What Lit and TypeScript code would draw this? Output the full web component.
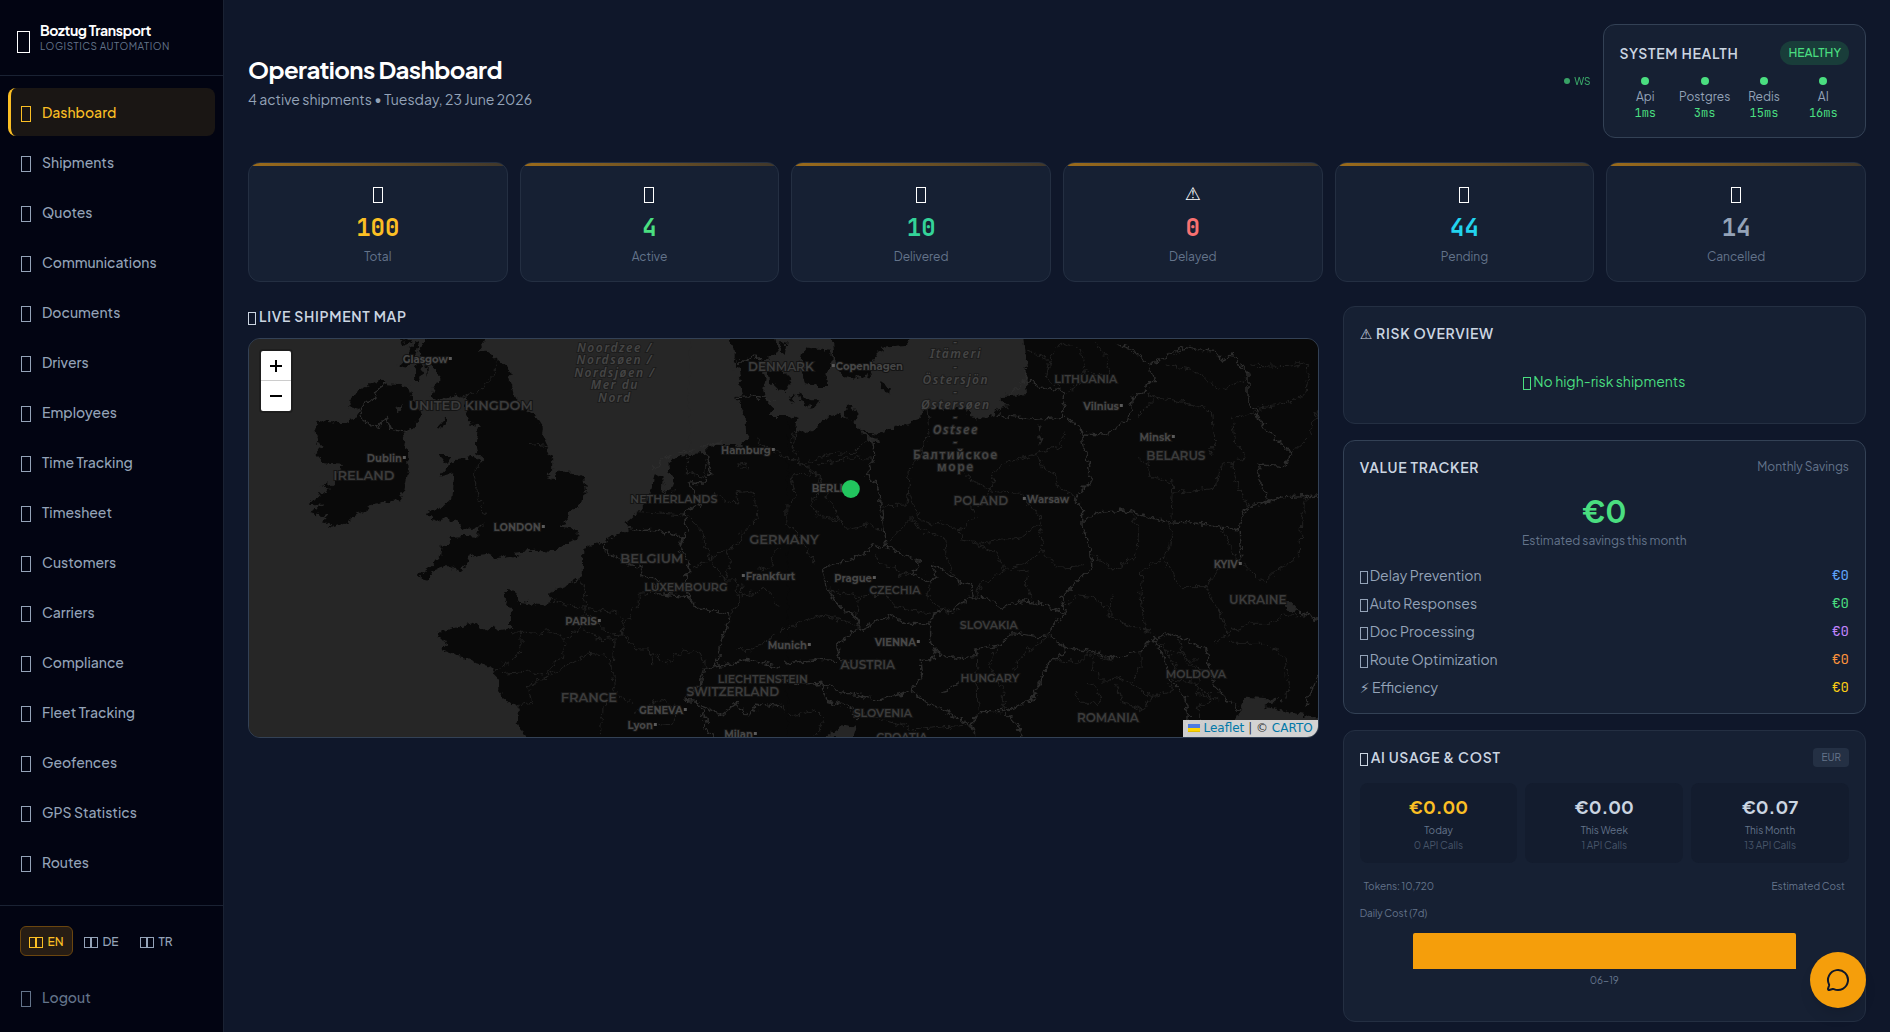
import { LitElement, html, css, svg } from "lit";
import { customElement, property, state } from "lit/decorators.js";
import { classMap } from "lit/directives/class-map.js";
import { styleMap } from "lit/directives/style-map.js";

const base = css`
  *,
  *::before,
  *::after {
    box-sizing: border-box;
  }
  h1,
  h2,
  p,
  ul,
  dl,
  dd,
  dt {
    margin: 0;
    padding: 0;
  }
  ul {
    list-style: none;
  }
  button {
    font: inherit;
    color: inherit;
    background: none;
    border: 0;
    padding: 0;
    cursor: pointer;
  }
  a {
    color: inherit;
    text-decoration: none;
  }
  .mono {
    font-family: "JetBrains Mono", "DejaVu Sans Mono", monospace;
  }
  .glyph {
    display: inline-block;
    width: 8px;
    height: 13px;
    margin-right: 2px;
    border: 1px solid currentColor;
    vertical-align: -3px;
  }
  .glyph.large {
    width: 10px;
    height: 16px;
    margin-right: 0;
  }
`;

const panel = css`
  .panel {
    background: rgba(30, 41, 59, 0.5);
    border: 1px solid #242f42;
    border-radius: 12px;
    padding: 16px;
  }
  .panel.strong {
    border-color: #334155;
  }
  .heading {
    font-size: 14px;
    line-height: 20px;
    font-weight: 600;
    letter-spacing: 0.05em;
    color: #cbd5e1;
  }
  .heading .glyph {
    margin-right: 3px;
  }
  .row {
    display: flex;
    align-items: center;
    justify-content: space-between;
  }
`;

/* Outlined placeholder box used for pictographs. */
const glyph = html`<i class="glyph" aria-hidden="true"></i>`;
const largeGlyph = html`<i class="glyph large" aria-hidden="true"></i>`;

/* ---------- Sidebar ---------- */

const NAV = [
  "Dashboard",
  "Shipments",
  "Quotes",
  "Communications",
  "Documents",
  "Drivers",
  "Employees",
  "Time Tracking",
  "Timesheet",
  "Customers",
  "Carriers",
  "Compliance",
  "Fleet Tracking",
  "Geofences",
  "GPS Statistics",
  "Routes",
];

const LANGS = ["EN", "DE", "TR"];

@customElement("side-bar")
class SideBar extends LitElement {
  @state() private active = "Dashboard";
  @state() private lang = "EN";

  static styles = [
    base,
    css`
      :host {
        display: flex;
        flex-direction: column;
        width: 224px;
        flex: none;
        background: #020412;
        border-right: 1px solid #1a2233;
      }
      .brand {
        display: flex;
        align-items: center;
        gap: 10px;
        height: 76px;
        flex: none;
        padding: 0 17px;
        border-bottom: 1px solid #1a2233;
      }
      .logo {
        font-size: 24px;
        line-height: 32px;
        color: #fff;
      }
      .logo .glyph {
        width: 13px;
        height: 22px;
        margin: 0;
        vertical-align: -5px;
      }
      .name {
        font-size: 14px;
        line-height: 18px;
        font-weight: 700;
        letter-spacing: -0.025em;
        color: #fff;
      }
      .tag {
        font-size: 10px;
        line-height: 15px;
        letter-spacing: 0.05em;
        color: #64748b;
      }
      nav {
        flex: 1;
        min-height: 0;
        overflow: hidden;
        padding: 12px 8px;
      }
      ul {
        display: grid;
        gap: 2px;
      }
      .item {
        display: flex;
        align-items: center;
        gap: 11px;
        width: 100%;
        height: 48px;
        padding: 0 12px 0 10px;
        border-left: 3px solid transparent;
        border-radius: 8px;
        font-size: 14px;
        font-weight: 500;
        color: #94a3b8;
      }
      .item.on {
        color: #fbbf24;
        border-left-color: #fbbf24;
        background: #1a1614;
      }
      .icon {
        font-size: 18px;
        line-height: 28px;
      }
      .foot {
        flex: none;
        border-top: 1px solid #1a2233;
        padding: 20px 8px 11px;
      }
      .langs {
        display: flex;
        gap: 2px;
        padding: 0 12px;
        margin-bottom: 17px;
      }
      .lang {
        min-width: 53px;
        height: 30px;
        padding: 0 8px;
        border: 1px solid transparent;
        border-radius: 6px;
        font-size: 12px;
        font-weight: 500;
        color: #94a3b8;
        white-space: nowrap;
      }
      .lang .glyph {
        width: 7px;
        height: 11px;
        margin: 0;
        vertical-align: -2px;
      }
      .lang .glyph + span {
        margin-left: 4px;
      }
      .lang.on {
        color: #fbbf24;
        background: #271d14;
        border-color: #6b460f;
      }
      .logout {
        color: #64748b;
      }
    `,
  ];

  render() {
    return html`
      <div class="brand">
        <span class="logo">${glyph}</span>
        <div>
          <p class="name">Boztug Transport</p>
          <p class="tag">LOGISTICS AUTOMATION</p>
        </div>
      </div>
      <nav>
        <ul>
          ${NAV.map(
            (label) => html`<li>
              <a
                href="#"
                class=${classMap({ item: true, on: label === this.active })}
                @click=${(e: Event) => {
                  e.preventDefault();
                  this.active = label;
                }}
                ><span class="icon">${largeGlyph}</span><span>${label}</span></a
              >
            </li>`,
          )}
        </ul>
      </nav>
      <div class="foot">
        <div class="langs">
          ${LANGS.map(
            (code) => html`<button
              class=${classMap({ lang: true, on: code === this.lang })}
              @click=${() => (this.lang = code)}
            >${glyph}${glyph}<span>${code}</span></button>`,
          )}
        </div>
        <button class="item logout"><span class="icon">${largeGlyph}</span><span>Logout</span></button>
      </div>
    `;
  }
}

/* ---------- System health ---------- */

const SERVICES: [string, string][] = [
  ["Api", "1ms"],
  ["Postgres", "3ms"],
  ["Redis", "15ms"],
  ["AI", "16ms"],
];

@customElement("system-health")
class SystemHealth extends LitElement {
  static styles = [
    base,
    panel,
    css`
      :host {
        display: block;
      }
      .badge {
        font-size: 12px;
        line-height: 16px;
        font-weight: 500;
        padding: 4px 8px;
        border-radius: 12px;
        color: #4ade80;
        background: #193d3a;
      }
      .services {
        display: grid;
        grid-template-columns: repeat(4, minmax(51px, 1fr));
        gap: 8px;
        margin-top: 12px;
      }
      .service {
        display: flex;
        flex-direction: column;
        align-items: center;
        font-size: 12px;
        line-height: 16px;
        color: #94a3b8;
      }
      .dot {
        width: 8px;
        height: 8px;
        border-radius: 50%;
        background: #4ade80;
        margin-bottom: 4px;
      }
      .ms {
        color: #4ade80;
      }
    `,
  ];

  render() {
    return html`<section class="panel strong">
      <div class="row">
        <h2 class="heading">SYSTEM HEALTH</h2>
        <span class="badge">HEALTHY</span>
      </div>
      <div class="services">
        ${SERVICES.map(
          ([name, ms]) => html`<div class="service">
            <span class="dot"></span><span>${name}</span><span class="ms mono">${ms}</span>
          </div>`,
        )}
      </div>
    </section>`;
  }
}

/* ---------- Stat card ---------- */

@customElement("stat-card")
class StatCard extends LitElement {
  @property() icon = "";
  @property() value = "";
  @property() label = "";
  @property() color = "";

  static styles = [
    base,
    css`
      :host {
        display: block;
      }
      .card {
        position: relative;
        overflow: hidden;
        padding: 16px;
        text-align: center;
        background: rgba(30, 41, 59, 0.5);
        border: 1px solid #242f42;
        border-radius: 12px;
      }
      .card::before {
        content: "";
        position: absolute;
        top: 0;
        left: 0;
        right: 0;
        height: 3px;
        background: linear-gradient(90deg, #f59e0b, rgba(245, 158, 11, 0.3));
        opacity: 0.6;
      }
      .icon {
        font-size: 18px;
        line-height: 28px;
        height: 28px;
        color: #fff;
      }
      .value {
        font-size: 24px;
        line-height: 34px;
        margin-top: 4px;
        font-weight: 700;
      }
      .label {
        font-size: 12px;
        line-height: 16px;
        margin-top: 4px;
        color: #64748b;
      }
    `,
  ];

  render() {
    return html`<div class="card">
      <p class="icon">${this.icon || largeGlyph}</p>
      <p class="value mono" style=${styleMap({ color: this.color })}>${this.value}</p>
      <p class="label">${this.label}</p>
    </div>`;
  }
}

/* ---------- Map ---------- */

const WEST_LAND = [
  "M1427 20L1430 90L1448 110L1455 150L1440 200L1462 250L1460 280L1475 320L1450 325L1450 345L1395 345L1355 352L1355 368L1310 372L1275 378L1248 395L1250 430L1262 445L1255 480L1235 490L1240 460L1222 435L1205 430L1198 470L1190 505L1165 540L1120 580L1140 595L1110 605L1058 635L995 655L993 740L960 762L900 785L897 805L915 812L875 825L810 815L800 785L765 782L770 810L787 835L788 895L755 900L735 890L710 905L680 878L640 890L580 905L580 925L605 940L585 960L625 975L660 985L690 1000L740 1015L735 1030L755 1050L750 1080L775 1115L810 1130L810 1180L840 1240L1590 1240L1590 20Z",
  "M555 200L560 180L580 150L570 120L530 90L520 60L530 40L545 10L720 10L710 40L690 65L640 70L715 62L750 90L782 120L788 160L800 210L825 230L858 255L880 290L878 310L895 348L885 355L910 390L910 415L890 435L918 445L922 425L965 425L1000 445L1005 480L998 520L975 535L955 555L950 580L920 590L982 602L980 622L940 645L905 665L850 662L800 668L805 685L780 678L745 685L720 672L690 675L665 685L655 712L640 725L615 712L590 712L560 722L550 750L515 742L535 725L555 710L585 675L590 645L610 645L612 622L650 618L690 620L690 602L715 575L690 590L668 600L645 590L630 575L600 565L565 575L540 545L580 540L615 505L618 460L620 430L580 440L610 405L630 390L660 385L680 378L700 395L710 385L690 370L685 340L690 310L700 285L680 290L665 270L650 240L655 205L620 195L580 210Z",
  "M405 150L425 160L460 162L490 168L500 200L515 225L525 255L515 280L495 302L470 310L475 335L485 360L488 430L478 480L465 510L430 515L385 525L350 550L310 575L270 590L235 580L255 562L205 545L240 525L200 518L240 490L265 478L240 468L270 460L285 425L300 405L245 400L220 370L245 350L220 340L235 315L215 305L225 272L290 280L330 270L350 240L315 230L330 205L345 180L375 165Z",
  "M600 260L598 280L580 298L575 290Z",
  "M583 378L610 378L612 395L600 403Z",
  "M790 675L815 675L800 685Z",
  "M510 150L508 115L520 92L532 112L522 150Z",
  "M545 138L538 110L546 108Z",
  "M470 28L500 30L490 50L474 45Z",
  "M480 85L500 45L520 35L510 75L490 110L462 105Z",
];

const WEST_WATER = ["M1228 445L1250 425L1262 448L1255 470L1225 490Z", "M452 235L470 225L472 245L458 248Z"];

const BALTIC_WATER = [
  "M250 0L265 50L215 75L225 120L220 160L225 190L250 215L240 240L290 240L320 248L315 285L350 290L380 275L400 250L440 235L465 245L490 255L510 280L540 290L560 295L620 270L680 255L700 225L740 215L830 215L840 240L880 248L915 235L930 215L960 210L930 200L930 180L1015 178L1000 0L665 0L650 30L575 35L565 60L540 90L550 115L500 125L460 120L440 90L430 50L425 0Z",
  "M510 275L530 298L560 305L565 322L540 318L515 292Z",
  "M120 0L135 60L128 100L150 120L160 180L150 220L165 240L165 280L180 305L150 330L100 322L60 330L20 345L0 352L0 0Z",
];

const BALTIC_ISLANDS = [
  "M235 110L265 100L290 115L305 145L290 165L265 160L245 140Z",
  "M335 60L355 35L395 40L425 45L425 80L405 120L410 150L380 150L345 140L335 110L345 90Z",
  "M320 172L360 190L392 190L370 215L340 205Z",
  "M300 190L318 170L308 200Z",
  "M575 138L600 155L598 172L573 160Z",
  "M468 215L485 208L503 235L495 258L465 240Z",
  "M270 20L290 15L285 60L275 50Z",
  "M140 180L160 178L158 195L142 192Z",
];

const EAST_WATER = [
  "M1330 1100L1430 1108L1400 1120L1380 1130L1450 1145L1540 1165L1540 1232L1240 1232L1300 1165Z",
  "M125 1225L180 1185L220 1190L205 1230Z",
  "M1432 815L1450 812L1485 850L1455 842Z",
  "M735 285L748 290L740 308Z",
  "M736 320L750 325L742 345Z",
];

const WEST_BORDERS = [
  "M428 160L400 180L390 205L370 215L350 245L360 270L400 292L425 262L440 295L490 305",
  "M1058 638L1062 665L1130 700L1165 715L1170 745L1215 750L1205 790L1300 800L1330 835L1430 857",
  "M1140 600L1180 598L1215 600L1260 612L1285 625L1275 655L1300 690L1310 715L1290 750L1305 800",
  "M1355 370L1365 430L1355 460L1305 455L1335 520L1290 550L1300 600L1280 650",
  "M1430 857L1410 890L1395 950L1388 1008L1350 1015L1340 1060L1290 1110L1330 1115L1355 1170L1345 1200L1380 1218",
  "M1388 1008L1440 1000L1470 985L1540 1005L1568 1012",
  "M1345 1130L1400 1155L1440 1120L1480 1165L1500 1120L1568 1130",
];

const WEST_REGIONS = [
  "M640 200L690 185L740 135L745 95",
  "M700 395L680 435L690 500L715 555",
  "M840 340L880 345L895 348",
  "M985 745L1000 780L1005 835L950 825L905 808",
  "M1005 835L1100 850L1120 880L1160 820L1160 790L1215 785",
  "M1120 880L1110 915L1080 918L1005 850",
  "M788 905L870 910L900 905L945 925L990 890L1000 840",
  "M818 905L815 970L735 1025",
  "M945 925L940 980L905 1005L892 1040L850 1025L750 1035",
  "M892 1040L960 1000L1010 970L1060 975L1080 1010L1090 1085L1140 1115",
  "M892 1045L835 1065L848 1120L805 1128",
  "M1110 905L1150 960L1190 960L1200 1000",
  "M1000 900L1050 930L1090 925L1085 1000",
  "M1185 960L1240 1000L1290 960L1340 975L1355 1010",
  "M1090 1085L1055 1130L1050 1215",
  "M1150 1150L1215 1110L1270 1130L1260 1185L1210 1180",
  "M1300 555L1340 600L1365 685L1410 750L1440 750",
  "M1380 490L1420 520L1450 515L1440 485L1490 480L1505 560L1460 610L1450 640L1410 660L1360 690L1310 715",
  "M1440 750L1450 810L1430 857",
  "M1355 380L1350 440L1300 430L1300 380",
  "M1440 955L1490 960L1560 910",
  "M1410 660L1425 700L1410 750",
  "M1480 790L1525 775L1568 830",
  "M1455 760L1460 800L1500 790",
  "M1160 545L1230 550L1290 555",
  "M1568 650L1540 680L1550 710L1500 720",
];

const EAST_BORDERS = [
  "M265 318L268 380L250 432L282 480L288 540L305 650L285 655L265 638L258 660L200 690L120 715L140 780L160 820L215 860L232 900L310 858L360 880L430 882L440 850L500 835L545 800",
  "M305 645L345 670L395 690L390 720L375 730L430 755L445 735L435 705L475 725L510 755L540 765L552 800L595 805L630 835L690 812L750 820L815 855L803 800L890 710L885 660L865 590L862 530L838 505L885 455L880 400L862 320L855 290L815 262",
  "M700 150L750 172L805 185L815 215L805 262L730 268L620 255",
  "M862 312L925 315L995 270L1005 205L1045 180L1050 155L1070 155L1052 110",
  "M960 40L1000 55L1055 105L1160 50L1240 65L1260 90L1290 75L1335 130L1335 210L1380 290L1455 370L1440 410L1370 405L1365 440L1395 515L1370 525",
  "M862 575L910 548L980 540L1100 575L1190 580L1250 590L1310 600L1315 560L1340 530L1440 500L1535 495",
  "M1310 600L1315 700",
  "M232 900L205 905L165 945L175 995L210 1000",
  "M430 882L430 935L450 970L490 985L555 980L560 955L630 945L660 908L735 920L770 915L815 955L790 985L770 990L720 1110L640 1145L570 1145L545 1185L400 1105L375 1080L405 1040L400 990L440 985L445 950",
  "M770 915L775 885L815 855",
  "M815 955L880 960L950 985L1030 965L1060 930L1110 910L1150 925L1215 960L1225 1010L1240 1070L1310 1145",
  "M1065 925L1090 970L1110 1050L1150 1090L1165 1150L1160 1220",
  "M0 1050L60 1065L120 1060L170 1085L280 1110L375 1085",
  "M10 1000L100 990L165 995",
  "M545 1185L560 1222",
  "M640 1145L680 1190L685 1222",
  "M120 1060L130 1110L200 1130L220 1170",
  "M1480 845L1535 868",
  "M1535 1035L1510 1090L1500 1130",
];

const EAST_REGIONS = [
  "M420 240L425 310L395 385L370 410L365 480L360 525L290 528",
  "M0 375L60 400L110 435L120 470L170 570L195 600L250 585L290 600",
  "M30 440L60 430L110 435L125 480L90 520L110 560L180 575",
  "M30 440L45 500L20 530L20 580L50 610L100 700",
  "M260 320L210 370L130 375L60 410",
  "M40 300L30 340L50 370",
  "M365 480L400 570L440 585L460 575L510 600L560 560L540 520L580 525L610 450L600 430",
  "M600 430L645 400L735 370L800 345L815 305",
  "M735 370L750 420L790 435L795 470L838 500",
  "M515 420L560 460L610 485L690 490L740 560L750 660L700 700L640 720L575 760L560 800",
  "M510 600L520 630L570 640L635 630L690 620L745 575",
  "M620 690L660 725L705 720L700 760L720 810",
  "M750 665L790 715L870 710",
  "M555 640L620 670L640 720",
  "M305 640L350 590L375 565L400 600",
  "M400 600L470 620L475 680L500 740",
  "M225 800L300 790L330 830L430 850",
  "M215 860L225 800L140 780",
  "M390 720L340 740L330 710L280 700L270 670",
  "M440 740L420 800L480 850L520 840",
  "M0 905L30 890L115 855L190 875L225 890",
  "M560 960L565 1140",
  "M620 940L600 1010L640 1090L640 1140",
  "M660 1030L690 980L770 915",
  "M790 990L850 1000L880 970L950 990",
  "M900 960L890 1020L930 1060L960 1040L1000 1060L1030 1010L1030 970",
  "M840 1080L860 1120L920 1120L900 1070L870 1060",
  "M960 1060L980 1120L1040 1140L1060 1100L1000 1060",
  "M1060 1100L1120 1080L1110 1050",
  "M1000 545L1025 600L1015 680L950 720L905 685L890 670",
  "M1110 575L1120 610L1100 680L1035 720L1030 800L1040 900L1065 915",
  "M950 790L935 850L1000 890L1060 905",
  "M1100 690L1140 770L1215 770L1260 700",
  "M1215 770L1260 860L1280 910L1235 945",
  "M1280 910L1340 880L1400 880L1430 860L1500 855L1535 865",
  "M1320 700L1380 760L1420 720L1480 680L1490 560L1500 500",
  "M1260 600L1310 700",
  "M705 60L770 90L760 145L805 180",
  "M770 90L800 40L860 60L870 120L930 140L940 95L900 40",
  "M870 120L850 170L810 190",
  "M1070 200L1120 210L1230 240L1240 330L1225 370",
  "M1045 190L1070 205L1020 260",
  "M1100 105L1190 125L1250 180L1330 150",
  "M1290 265L1300 340L1330 385L1290 395L1300 450L1335 530",
  "M1300 265L1340 255L1360 240",
  "M1340 105L1440 110L1510 100L1500 190L1430 225L1360 235",
  "M1020 385L1050 400L1055 440L1120 460L1125 490L1240 475L1260 400L1290 395",
  "M1120 460L1115 575",
  "M1460 370L1510 320L1535 240",
  "M1070 920L1100 960L1150 970L1180 1010L1220 1020",
  "M1100 960L1130 1010L1120 1050L1180 1060L1230 1100",
  "M1140 930L1150 990L1200 990",
  "M1160 1000L1200 1040L1190 1090L1250 1110",
  "M1280 940L1380 940L1440 980L1450 1060L1440 1110",
  "M1240 1110L1190 1130L1210 1180L1170 1200",
  "M0 1120L30 1160L100 1140L130 1170L100 1220",
  "M200 1130L260 1160L330 1180L380 1200L470 1190L545 1185",
  "M810 830L850 795L890 800L950 850",
];

const COUNTRIES: [string, number, number, "l" | "m" | "s"][] = [
  ["UNITED KINGDOM", 222, 66, "l"],
  ["IRELAND", 115, 136, "l"],
  ["NETHERLANDS", 425, 160, "s"],
  ["BELGIUM", 403, 219, "l"],
  ["LUXEMBOURG", 437, 248, "s"],
  ["FRANCE", 340, 358, "l"],
  ["DENMARK", 532, 27, "m"],
  ["SWITZERLAND", 484, 352, "m"],
  ["LIECHTENSTEIN", 514, 340, "s"],
  ["GERMANY", 535, 200, "l"],
  ["CZECHIA", 646, 251, "s"],
  ["AUSTRIA", 619, 325, "m"],
  ["SLOVENIA", 634, 374, "s"],
  ["CROATIA", 653, 398, "s"],
  ["HUNGARY", 741, 339, "s"],
  ["SLOVAKIA", 740, 286, "s"],
  ["POLAND", 732, 161, "m"],
  ["LITHUANIA", 837, 40, "s"],
  ["BELARUS", 927, 116, "m"],
  ["UKRAINE", 1009, 260, "m"],
  ["MOLDOVA", 947, 335, "s"],
  ["ROMANIA", 859, 378, "m"],
];

/* name, x of the settlement dot, centre y, side of the dot the name stands on */
const CITIES: [string, number, number, "start" | "end"][] = [
  ["Glasgow", 201, 20, "end"],
  ["Dublin", 155, 119, "end"],
  ["LONDON", 294, 188, "end"],
  ["PARIS", 350, 282, "end"],
  ["GENEVA", 436, 371, "end"],
  ["Lyon", 406, 386, "end"],
  ["Milan", 506, 395, "end"],
  ["Hamburg", 524, 111, "end"],
  ["Copenhagen", 584, 27, "start"],
  ["Frankfurt", 494, 237, "start"],
  ["Munich", 560, 306, "end"],
  ["BERLIN", 604, 149, "end"],
  ["Prague", 625, 239, "end"],
  ["VIENNA", 669, 303, "end"],
  ["Warsaw", 775, 160, "start"],
  ["Vilnius", 872, 67, "end"],
  ["Minsk", 924, 98, "end"],
  ["KYIV", 991, 225, "end"],
];

const SEAS: [string, number, number][] = [
  ["Noordzee /", 366, 8],
  ["Nordsøen /", 366, 20],
  ["Nordsjøen /", 366, 33],
  ["Mer du", 366, 45],
  ["Nord", 366, 58],
  ["-", 707, 2],
  ["Itämeri", 707, 14],
  ["-", 707, 27],
  ["Östersjön", 707, 40],
  ["-", 707, 52],
  ["Østersøen", 707, 65],
  ["-", 707, 77],
  ["Ostsee", 707, 90],
  ["-", 707, 102],
];

@customElement("shipment-map")
class ShipmentMap extends LitElement {
  static styles = [
    base,
    css`
      :host {
        display: block;
      }
      .frame {
        position: relative;
        height: 400px;
        border: 1px solid #334155;
        border-radius: 12px;
        overflow: hidden;
        background: #262626;
      }
      .canvas {
        display: block;
        width: 100%;
        height: 100%;
      }
      .land {
        fill: #090909;
      }
      .water {
        fill: #262626;
      }
      .border,
      .region {
        fill: none;
        vector-effect: non-scaling-stroke;
        stroke-linejoin: round;
      }
      .border {
        stroke: #2d2d2d;
        stroke-width: 1.4;
      }
      .region {
        stroke: #202020;
        stroke-width: 1;
      }
      text {
        text-anchor: middle;
        dominant-baseline: central;
        paint-order: stroke;
        stroke: #141414;
        stroke-width: 2;
        font-family: Montserrat, sans-serif;
        font-weight: 600;
      }
      .country {
        fill: #3c3c3c;
      }
      .l {
        font-size: 13px;
      }
      .m {
        font-size: 12px;
      }
      .s {
        font-size: 11px;
      }
      .city {
        font-size: 10px;
        font-weight: 700;
        fill: #474747;
      }
      .start {
        text-anchor: start;
      }
      .end {
        text-anchor: end;
      }
      .sea {
        font-family: "Noto Sans", sans-serif;
        font-size: 12px;
        font-style: italic;
        letter-spacing: 0.125em;
        fill: #454545;
        stroke: #1c1c1c;
      }
      .upright {
        font-style: normal;
      }
      .pin {
        fill: #22c55e;
      }
      .zoom {
        position: absolute;
        top: 10px;
        left: 10px;
        display: grid;
        border: 2px solid rgba(0, 0, 0, 0.2);
        border-radius: 4px;
      }
      .zoom button {
        display: flex;
        align-items: center;
        justify-content: center;
        width: 30px;
        height: 30px;
        background: #fff;
      }
      .zoom button:first-child {
        border-bottom: 1px solid #ccc;
        border-radius: 2px 2px 0 0;
      }
      .zoom button:last-child {
        border-radius: 0 0 2px 2px;
      }
      .credit {
        position: absolute;
        right: 0;
        bottom: 0;
        padding: 0 5px;
        font-family: "DejaVu Sans", sans-serif;
        font-size: 12px;
        line-height: 17px;
        color: #333;
        background: rgba(255, 255, 255, 0.8);
        white-space: nowrap;
      }
      .credit a {
        color: #0078a8;
      }
    `,
  ];

  private paths(list: string[], cls: string) {
    return list.map((d) => svg`<path class=${cls} d=${d}></path>`);
  }

  render() {
    return html`<div class="frame">
      <svg class="canvas" viewBox="0 0 1069 398" preserveAspectRatio="xMidYMid slice" role="img" aria-label="Shipment map">
        <defs>
          <filter id="rough" x="0" y="0" width="1069" height="398" filterUnits="userSpaceOnUse" color-interpolation-filters="sRGB">
            <feTurbulence type="fractalNoise" baseFrequency="0.16" numOctaves="3" seed="4" result="n"></feTurbulence>
            <feDisplacementMap in="SourceGraphic" in2="n" scale="9" xChannelSelector="R" yChannelSelector="G"></feDisplacementMap>
          </filter>
        </defs>
        <g filter="url(#rough)">
          <rect class="water" x="-20" y="-20" width="1110" height="440"></rect>
          <rect class="land" x="531" y="-20" width="560" height="440"></rect>
          <g transform="translate(-9 -9) scale(0.3443 0.3333)">
            ${this.paths(WEST_LAND, "land")} ${this.paths(WEST_WATER, "water")}
          </g>
          <g transform="translate(441 -3) scale(0.3333)">
            ${this.paths(BALTIC_WATER, "water")} ${this.paths(BALTIC_ISLANDS, "land")}
          </g>
          <g transform="translate(531 -9) scale(0.3507 0.3333)">
            ${this.paths(EAST_WATER, "water")} ${this.paths(EAST_REGIONS, "region")}
            ${this.paths(EAST_BORDERS, "border")}
            <path class="border" d="M455 1085L480 1080L510 1058"></path>
          </g>
          <g transform="translate(-9 -9) scale(0.3443 0.3333)">
            ${this.paths(WEST_REGIONS, "region")} ${this.paths(WEST_BORDERS, "border")}
            <path class="border" d="M1200 420L1225 390L1260 372M1280 368L1320 358M1340 350L1400 335"></path>
          </g>
          <g transform="translate(441 -3) scale(0.3333)">
            <path class="border" d="M135 185L190 182L250 195"></path>
            <path class="border" d="M1010 100L1000 140L960 180"></path>
            <path class="border" d="M140 75L165 75L200 58L212 70"></path>
            <path class="region" d="M200 305L215 330L270 350L330 385L385 420L385 460L365 500"></path>
            <path class="region" d="M315 290L310 340L330 380M385 385L440 375L480 365L545 370"></path>
            <path class="region" d="M150 380L180 390L175 400L155 392Z"></path>
          </g>
        </g>
        ${COUNTRIES.map(([t, x, y, size]) => svg`<text class="country ${size}" x=${x} y=${y}>${t}</text>`)}
        ${CITIES.map(
          ([t, x, y, side]) => svg`<text class="city ${side}" x=${side === "end" ? x - 2 : x + 3} y=${y}>${t}</text>
            <rect x=${x - 1} y=${y - 2} width="3" height="3" fill="#5a5a5a"></rect>`,
        )}
        ${SEAS.map(([t, x, y]) => svg`<text class="sea" x=${x} y=${y}>${t}</text>`)}
        <text class="sea upright" x="707" y="115">Балтийское</text>
        <text class="sea upright" x="707" y="127">море</text>
        <circle class="pin" cx="602" cy="150" r="9"></circle>
      </svg>
      <div class="zoom">
        <button aria-label="Zoom in">
          <svg width="12" height="12" viewBox="0 0 12 12"><path d="M6 0V12M0 6H12" stroke="#000" stroke-width="2"></path></svg>
        </button>
        <button aria-label="Zoom out">
          <svg width="12" height="12" viewBox="0 0 12 12"><path d="M0 6H12" stroke="#000" stroke-width="2"></path></svg>
        </button>
      </div>
      <div class="credit">
        <a href="#"
          ><svg width="12" height="8" viewBox="0 0 12 8">
            <path fill="#4c7be1" d="M0 0h12v4H0z"></path>
            <path fill="#ffd500" d="M0 4h12v3H0z"></path>
            <path fill="#e0bc00" d="M0 7h12v1H0z"></path></svg
          > Leaflet</a
        > | © <a href="#">CARTO</a>
      </div>
    </div>`;
  }
}

/* ---------- Right-hand panels ---------- */

const SAVINGS: [string, string, string, string][] = [
  ["", "Delay Prevention", "€0", "#60a5fa"],
  ["", "Auto Responses", "€0", "#4ade80"],
  ["", "Doc Processing", "€0", "#c084fc"],
  ["", "Route Optimization", "€0", "#fb923c"],
  ["⚡ ", "Efficiency", "€0", "#facc15"],
];

@customElement("value-tracker")
class ValueTracker extends LitElement {
  static styles = [
    base,
    panel,
    css`
      :host {
        display: block;
      }
      .note {
        font-size: 12px;
        line-height: 16px;
        color: #64748b;
      }
      .total {
        text-align: center;
        margin: 16px 0;
      }
      .amount {
        font-size: 30px;
        line-height: 36px;
        font-weight: 700;
        color: #4ade80;
        margin-bottom: 4px;
      }
      .list {
        display: grid;
        gap: 8px;
        font-size: 14px;
        line-height: 20px;
        color: #94a3b8;
      }
      .list .row {
        height: 20px;
      }
    `,
  ];

  render() {
    return html`<section class="panel strong">
      <div class="row">
        <h2 class="heading">VALUE TRACKER</h2>
        <span class="note">Monthly Savings</span>
      </div>
      <div class="total">
        <p class="amount">€0</p>
        <p class="note">Estimated savings this month</p>
      </div>
      <dl class="list">
        ${SAVINGS.map(
          ([icon, label, value, color]) => html`<div class="row">
            <dt>${icon || glyph}${label}</dt>
            <dd class="mono" style=${styleMap({ color })}>${value}</dd>
          </div>`,
        )}
      </dl>
    </section>`;
  }
}

const USAGE: [string, string, string][] = [
  ["€0.00", "Today", "0 API Calls"],
  ["€0.00", "This Week", "1 API Calls"],
  ["€0.07", "This Month", "13 API Calls"],
];

@customElement("ai-usage")
class AiUsage extends LitElement {
  static styles = [
    base,
    panel,
    css`
      :host {
        display: block;
        font-size: 10px;
        line-height: 15px;
        color: #64748b;
      }
      .title {
        height: 20px;
      }
      .currency {
        padding: 2px 8px;
        border-radius: 4px;
        background: #243044;
      }
      .boxes {
        display: grid;
        grid-template-columns: repeat(3, 1fr);
        gap: 8px;
        margin-top: 16px;
        text-align: center;
      }
      .box {
        padding: 10px;
        border-radius: 8px;
        background: #131c2e;
      }
      .cost {
        font-size: 18px;
        line-height: 28px;
        font-weight: 700;
        color: #cbd5e1;
        margin-bottom: 2px;
      }
      .box:first-child .cost {
        color: #fbbf24;
      }
      .calls {
        color: #475569;
      }
      .meta {
        margin-top: 16px;
        padding: 0 4px;
      }
      .caption {
        margin-top: 12px;
      }
      .chart {
        display: grid;
        justify-items: center;
        align-content: start;
        gap: 4px;
        height: 72px;
        margin-top: 12px;
      }
      .bar {
        height: 36px;
        border-radius: 2px 2px 0 0;
        background: #f59e0b;
      }
    `,
  ];

  render() {
    return html`<section class="panel">
      <div class="row title">
        <h2 class="heading">${glyph}AI USAGE &amp; COST</h2>
        <span class="currency">EUR</span>
      </div>
      <div class="boxes">
        ${USAGE.map(
          ([cost, label, calls]) => html`<div class="box">
            <p class="cost">${cost}</p>
            <p>${label}</p>
            <p class="calls">${calls}</p>
          </div>`,
        )}
      </div>
      <div class="row meta"><span>Tokens: 10,720</span><span>Estimated Cost</span></div>
      <p class="caption">Daily Cost (7d)</p>
      <div class="chart">
        <div class="bar" style=${styleMap({ width: "78.4%" })}></div>
        <span>06-19</span>
      </div>
    </section>`;
  }
}

/* ---------- Page ---------- */

const STATS: [string, string, string, string][] = [
  ["", "100", "Total", "#fbbf24"],
  ["", "4", "Active", "#4ade80"],
  ["", "10", "Delivered", "#34d399"],
  ["⚠", "0", "Delayed", "#f87171"],
  ["", "44", "Pending", "#22d3ee"],
  ["", "14", "Cancelled", "#94a3b8"],
];

@customElement("app-root")
class AppRoot extends LitElement {
  static styles = [
    base,
    panel,
    css`
      :host {
        display: flex;
        height: 100vh;
        overflow: hidden;
        background: #0f172a;
        color: #fff;
        font-family: "Plus Jakarta Sans", "DejaVu Sans", sans-serif;
      }
      main {
        flex: 1;
        min-width: 0;
        padding: 24px;
        overflow-y: auto;
        scrollbar-width: none;
      }
      header {
        display: flex;
        align-items: center;
        justify-content: space-between;
        margin-bottom: 24px;
      }
      h1 {
        font-size: 24px;
        line-height: 32px;
        font-weight: 700;
        letter-spacing: -0.025em;
      }
      .sub {
        margin-top: 4px;
        font-size: 14px;
        line-height: 20px;
        color: #94a3b8;
      }
      .status {
        display: flex;
        align-items: center;
        gap: 12px;
      }
      .ws {
        display: flex;
        align-items: center;
        gap: 4px;
        font-size: 10px;
        font-weight: 500;
        color: #4ade80;
        opacity: 0.7;
      }
      .ws::before {
        content: "";
        width: 6px;
        height: 6px;
        border-radius: 50%;
        background: #4ade80;
      }
      .stats {
        display: grid;
        grid-template-columns: repeat(6, 1fr);
        gap: 12px;
        margin-bottom: 24px;
      }
      .body {
        display: grid;
        grid-template-columns: repeat(3, minmax(0, 1fr));
        gap: 24px;
        align-items: start;
      }
      .wide {
        grid-column: span 2;
      }
      .wide .heading {
        height: 20px;
        margin-bottom: 12px;
      }
      .side {
        display: grid;
        gap: 16px;
      }
      .side .heading {
        height: 20px;
      }
      .clear {
        height: 52px;
        margin-top: 12px;
        padding: 16px;
        text-align: center;
        font-size: 14px;
        line-height: 20px;
        color: #4ade80;
      }
      .chat {
        position: fixed;
        right: 24px;
        bottom: 24px;
        display: flex;
        align-items: center;
        justify-content: center;
        width: 56px;
        height: 56px;
        border-radius: 50%;
        background: #f59e0b;
        color: #0f172a;
        box-shadow: 0 10px 15px -3px rgba(0, 0, 0, 0.1), 0 4px 6px -4px rgba(0, 0, 0, 0.1);
      }
    `,
  ];

  render() {
    return html`
      <side-bar></side-bar>
      <main>
        <header>
          <div>
            <h1>Operations Dashboard</h1>
            <p class="sub">4 active shipments • Tuesday, 23 June 2026</p>
          </div>
          <div class="status">
            <span class="ws">WS</span>
            <system-health></system-health>
          </div>
        </header>
        <div class="stats">
          ${STATS.map(
            ([icon, value, label, color]) =>
              html`<stat-card .icon=${icon} .value=${value} .label=${label} .color=${color}></stat-card>`,
          )}
        </div>
        <div class="body">
          <section class="wide">
            <h2 class="heading">${glyph}LIVE SHIPMENT MAP</h2>
            <shipment-map></shipment-map>
          </section>
          <div class="side">
            <section class="panel">
              <h2 class="heading">⚠ RISK OVERVIEW</h2>
              <p class="clear">${glyph}No high-risk shipments</p>
            </section>
            <value-tracker></value-tracker>
            <ai-usage></ai-usage>
          </div>
        </div>
      </main>
      <button class="chat" aria-label="Open chat">
        <svg width="24" height="24" viewBox="0 0 24 24" fill="none" stroke="currentColor" stroke-width="2" stroke-linecap="round" stroke-linejoin="round">
          <path d="M2.992 16.342a2 2 0 0 1 .094 1.167l-1.065 3.29a1 1 0 0 0 1.236 1.168l3.413-.998a2 2 0 0 1 1.099.092 10 10 0 1 0-4.777-4.719"></path>
        </svg>
      </button>
    `;
  }
}
